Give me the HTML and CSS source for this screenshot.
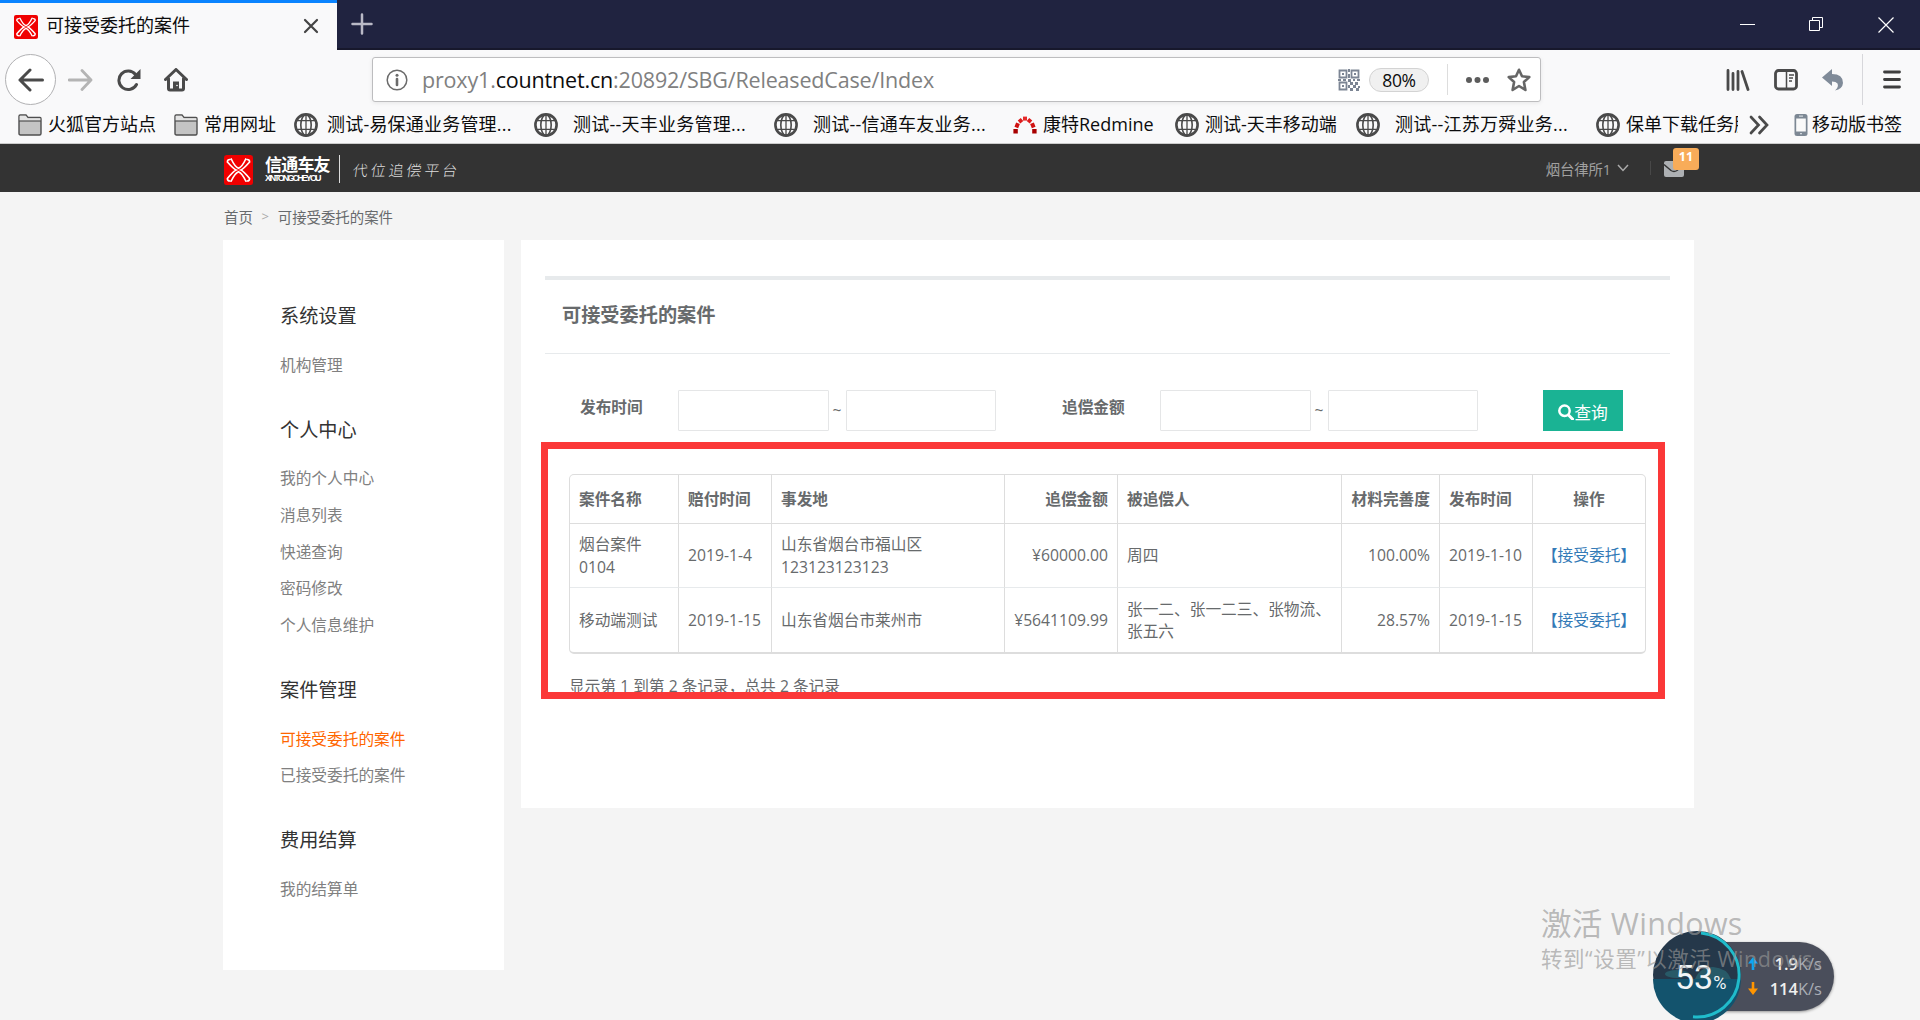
FILE: index.html
```html
<!DOCTYPE html>
<html lang="zh-CN">
<head>
<meta charset="utf-8">
<title>可接受委托的案件</title>
<link rel="stylesheet" href="styles.css">
</head>
<body>
<svg class="defs" width="0" height="0">
  <symbol id="globe" viewBox="0 0 24 24"><g fill="none" stroke="#4a4a4a"><circle cx="12" cy="12" r="10.6" stroke-width="2.6"/><ellipse cx="12" cy="12" rx="5.2" ry="10.4" stroke-width="1.6"/><path d="M12 1v22M3 7.6h18M3 16.4h18" stroke-width="1.3"/></g></symbol>
  <symbol id="folder" viewBox="0 0 24 24"><path d="M1 3.2Q1 2 2.200 2H8L10 4.500H22Q23 4.500 23 5.700V20.500Q23 22 21.500 22H2.500Q1 22 1 20.500Z" fill="#c4c4c4" stroke="#4f4f4f" stroke-width="1.400"/><path d="M1.700 7V3Q1.700 2.700 2.200 2.700H7.700L9.700 5.200H22.300V8H1.700Z" fill="#e4e4e4"/><path d="M1 8h22" stroke="#4f4f4f" stroke-width="1.200"/></symbol>
  <symbol id="brand" viewBox="0 0 30 30"><rect width="30" height="30" rx="2.500" fill="#f00000"/><path d="M7.500 4Q11 11.500 15 13.300Q19 11.500 22.500 4M7.500 26Q11 18.500 15 16.700Q19 18.500 22.500 26M3.500 7Q10 14 12.500 15Q10 16 3.500 23.500Q3.500 26 6 26M26.500 7Q20 14 17.500 15Q20 16 26.500 23.500Q26.500 26 24 26M3.500 7Q3.500 4.500 6 4.500M26.500 7Q26.500 4.500 24 4.500" fill="none" stroke="#fff" stroke-width="1.700" stroke-linecap="round"/></symbol>
</svg>

<div class="tabbar">
  <div class="tab">
    <svg class="tab-logo" width="24" height="24"><use href="#brand"/></svg>
    <span class="tab-title">可接受委托的案件</span>
    <svg width="16" height="16" viewBox="0 0 16 16"><path d="M2 2l12 12M14 2L2 14" stroke="#444" stroke-width="2.200" stroke-linecap="round"/></svg>
  </div>
  <svg class="plus" width="22" height="22" viewBox="0 0 22 22"><path d="M11 1.500v19M1.500 11h19" stroke="#b9b9c6" stroke-width="2.500" stroke-linecap="round"/></svg>
  <div class="winctl">
    <svg width="16" height="16"><path d="M0 7.500h15" stroke="#fff"/></svg>
    <svg width="16" height="16"><path d="M.5 3.500h10v10H.5zM3.500 3.500v-3h10v10h-3" fill="none" stroke="#fff"/></svg>
    <svg width="16" height="16"><path d="M.5 .5l15 15M15.500 .5l-15 15" stroke="#fff" stroke-width="1.200"/></svg>
  </div>
</div>

<div class="navbar">
  <div class="back"><svg width="26" height="24" viewBox="0 0 26 24"><path d="M24.500 12H2M12 2L2 12L12 22" fill="none" stroke="#4a4a4a" stroke-width="3" stroke-linecap="round" stroke-linejoin="round"/></svg></div>
  <svg class="fwd" width="25" height="24" viewBox="0 0 25 24"><path d="M1 12h22M14 2.500L23 12L14 21.500" fill="none" stroke="#b4b4b4" stroke-width="2.800" stroke-linecap="round" stroke-linejoin="round"/></svg>
  <svg class="reload" width="24" height="24" viewBox="0 0 24 24"><path d="M19.500 16.500A9.300 9.300 0 1 1 18.500 6.500" fill="none" stroke="#4a4a4a" stroke-width="3" stroke-linecap="round"/><path d="M23.500 1V11H13.500Z" fill="#4a4a4a"/></svg>
  <svg class="home" width="24" height="24" viewBox="0 0 24 24"><path d="M1.500 11.500L12 1.500L22.500 11.500M4.500 10.500V20.500Q4.500 22 6 22H18Q19.500 22 19.500 20.500V10.500" fill="none" stroke="#4a4a4a" stroke-width="3" stroke-linecap="round" stroke-linejoin="round"/><path d="M9 22V13.500H15V22Z" fill="#4a4a4a"/><circle cx="13" cy="17.500" r=".8" fill="#fff"/></svg>
  <div class="urlbar">
    <svg class="info" width="22" height="22" viewBox="0 0 22 22"><circle cx="11" cy="11" r="9.800" fill="none" stroke="#6b6b6b" stroke-width="1.500"/><path d="M11 10v6" stroke="#6b6b6b" stroke-width="2.600" stroke-linecap="round"/><circle cx="11" cy="6.300" r="1.500" fill="#6b6b6b"/></svg>
    <span class="url">proxy1.<b>countnet.cn</b>:20892/SBG/ReleasedCase/Index</span>
    <svg class="qr" width="22" height="22" viewBox="0 0 22 22"><g fill="none" stroke="#7c8594" stroke-width="1.800"><path d="M1.500 1.500h7v7h-7zM13.500 1.500h7v7h-7zM1.500 13.500h7v7h-7z"/></g><g fill="#7c8594"><path d="M4 4h2v2H4zM16 4h2v2h-2zM4 16h2v2H4zM10 0h2v3h-2zM10 5h2v4h-2zM0 10h3v2H0zM5 10h3v2H5zM10 10h3v3h-3zM15 10h2v2h-2zM19 10h3v2h-3zM12 13h3v3h-3zM17 13h3v3h-3zM10 16h2v3h-2zM15 16h3v3h-3zM20 17h2v2h-2zM12 19h3v3h-3zM18 19h3v3h-3z"/></g></svg>
    <span class="zoom">80%</span>
    <i class="sep"></i>
    <svg class="dots" width="24" height="8"><g fill="#5c5c5c"><circle cx="4" cy="4" r="3"/><circle cx="12.500" cy="4" r="3"/><circle cx="21" cy="4" r="3"/></g></svg>
    <svg class="star" width="24" height="24" viewBox="0 0 24 24"><path d="M12 1.800L15 8.300L22.300 9.100L16.900 14L18.400 22L12 18L5.600 22L7.100 14L1.700 9.100L9 8.300Z" fill="none" stroke="#666" stroke-width="2.600" stroke-linejoin="round"/></svg>
  </div>
  <div class="tools">
    <svg width="24" height="22" viewBox="0 0 24 22"><path d="M2 1.500v19M7 4.500v16M12 2.500v18M16 2.500l6 18" stroke="#4a4a4a" stroke-width="2.800" stroke-linecap="round"/></svg>
    <svg width="24" height="22" viewBox="0 0 24 22"><rect x="1.500" y="1.500" width="21" height="18.500" rx="3" fill="none" stroke="#4a4a4a" stroke-width="2.800"/><path d="M12.500 2v18M15 6h5M15 9h4M15 12h3" stroke="#4a4a4a" stroke-width="1.500"/></svg>
    <svg width="22" height="22" viewBox="0 0 22 22"><path d="M0 8.500L10 0V5Q21 5 21 14Q20.500 20 13 21.500Q17 18 15.500 14.500Q14 12.500 10 12.500V17Z" fill="#808b99"/></svg>
  </div>
  <svg class="burger" width="18" height="19" viewBox="0 0 18 19"><path d="M1.500 2h15M1.500 9.500h15M1.500 17h15" stroke="#3e3e3e" stroke-width="2.800" stroke-linecap="round"/></svg>
</div>

<div class="bookmarks">
  <div class="bm f"><svg><use href="#folder"/></svg><span>火狐官方站点</span></div>
  <div class="bm f"><svg><use href="#folder"/></svg><span>常用网址</span></div>
  <div class="bm g9"><svg><use href="#globe"/></svg><span>测试-易保通业务管理...</span></div>
  <div class="bm g15"><svg><use href="#globe"/></svg><span>测试--天丰业务管理...</span></div>
  <div class="bm g15"><svg><use href="#globe"/></svg><span>测试--信通车友业务...</span></div>
  <div class="bm f"><svg viewBox="0 0 24 24"><path d="M2.600 20.500V16" stroke="#a80000" stroke-width="4.400"/><path d="M21.400 20.500V16" stroke="#a80000" stroke-width="4.400"/><path d="M3.300 14.500L5 10.300M20.700 14.500L19 10.300" stroke="#d01212" stroke-width="4"/><path d="M6 9L9 6.500M18 9L15 6.500" stroke="#dd1c1c" stroke-width="4"/><path d="M10 5.600h4" stroke="#e52b2b" stroke-width="4"/></svg><span>康特Redmine</span></div>
  <div class="bm f"><svg><use href="#globe"/></svg><span>测试-天丰移动端</span></div>
  <div class="bm g15"><svg><use href="#globe"/></svg><span>测试--江苏万舜业务...</span></div>
  <div class="bm f last"><svg><use href="#globe"/></svg><span>保单下载任务服</span></div>
  <svg class="more" width="20" height="20" viewBox="0 0 20 20"><path d="M2 2l7.500 8L2 18M10.500 2L18 10l-7.500 8" fill="none" stroke="#4a4a4a" stroke-width="2.700" stroke-linecap="round"/></svg>
  <div class="bm phone"><svg viewBox="0 0 14 24"><rect x=".5" y="1" width="13" height="22" rx="2.500" fill="#7d8894"/><rect x="2.200" y="5.500" width="9.600" height="13" fill="#fafafa"/><path d="M5 3.200h4M6 20.700h2" stroke="#d0d6dc" stroke-width="1.300"/></svg><span>移动版书签</span></div>
</div>

<header class="site">
  <svg class="logo" width="29" height="30" viewBox="0 0 30 30" preserveAspectRatio="none"><use href="#brand"/></svg>
  <div class="brand"><span class="cn">信通车友</span><span class="en">XINTONGCHEYOU</span></div>
  <i class="bar"></i>
  <span class="slogan">代位追偿平台</span>
  <div class="user"><span>烟台律所1</span><svg width="12" height="8" viewBox="0 0 12 8"><path d="M1 1l5 5.500L11 1" fill="none" stroke="#aaa" stroke-width="1.500"/></svg></div>
  <i class="usep"></i>
  <div class="mail"><svg width="20" height="16" viewBox="0 0 20 16"><rect width="20" height="16" rx="2" fill="#adb0b3"/><path d="M0 3.500l7 6q3 2 6 0l7-6" fill="none" stroke="#333" stroke-width="1.400"/></svg><span class="badge">11</span></div>
</header>

<nav class="crumb"><span>首页</span><i>&gt;</i><span>可接受委托的案件</span></nav>

<div class="page">
  <aside>
    <section><h3>系统设置</h3><a>机构管理</a></section>
    <section><h3>个人中心</h3><a>我的个人中心</a><a>消息列表</a><a>快递查询</a><a>密码修改</a><a>个人信息维护</a></section>
    <section><h3>案件管理</h3><a class="on">可接受委托的案件</a><a>已接受委托的案件</a></section>
    <section><h3>费用结算</h3><a>我的结算单</a></section>
  </aside>
  <main>
    <h1>可接受委托的案件</h1>
    <form class="search">
      <label>发布时间</label><input type="text"><i>~</i><input type="text">
      <label class="second">追偿金额</label><input type="text"><i>~</i><input type="text">
      <button type="button"><svg width="16" height="16" viewBox="0 0 16 16"><circle cx="6.500" cy="6.800" r="5.200" fill="none" stroke="#fff" stroke-width="2.500"/><path d="M10.500 11l4 4" stroke="#fff" stroke-width="3" stroke-linecap="round"/></svg>查询</button>
    </form>
    <div class="result">
      <div class="tablebox">
      <table>
        <colgroup><col class="c1"><col class="c2"><col class="c3"><col class="c4"><col class="c5"><col class="c6"><col class="c7"><col class="c8"></colgroup>
        <thead><tr><th>案件名称</th><th>赔付时间</th><th>事发地</th><th class="r">追偿金额</th><th>被追偿人</th><th class="r">材料完善度</th><th>发布时间</th><th class="c">操作</th></tr></thead>
        <tbody>
          <tr><td>烟台案件<br>0104</td><td>2019-1-4</td><td>山东省烟台市福山区<br>123123123123</td><td class="r">¥60000.00</td><td>周四</td><td class="r">100.00%</td><td>2019-1-10</td><td class="c"><a>【接受委托】</a></td></tr>
          <tr><td>移动端测试</td><td>2019-1-15</td><td>山东省烟台市莱州市</td><td class="r">¥5641109.99</td><td>张一二、张一二三、张物流、<br>张五六</td><td class="r">28.57%</td><td>2019-1-15</td><td class="c"><a>【接受委托】</a></td></tr>
        </tbody>
      </table>
      </div>
      <p>显示第 1 到第 2 条记录，总共 2 条记录</p>
    </div>
  </main>
</div>

<div class="widget">
  <div class="pill">
    <div class="rate"><svg width="10" height="13" viewBox="0 0 10 13"><path d="M5 0l5 6.500H6.300V13H3.700V6.500H0z" fill="#10a5f5"/></svg><span><b>1.9</b>K/s</span></div>
    <div class="rate"><svg width="10" height="13" viewBox="0 0 10 13"><path d="M5 13l5-6.500H6.300V0H3.700v6.500H0z" fill="#ff9500"/></svg><span><b>114</b>K/s</span></div>
  </div>
  <svg class="ball" width="90" height="90" viewBox="0 0 90 90"><circle cx="45" cy="45" r="44" fill="#25384a"/><path d="M1 49H89A44 44 0 0 1 1 49Z" fill="#13536d"/><ellipse cx="25" cy="44" rx="12" ry="4" fill="#285a68"/><path d="M43 49Q48 37 61 37Q75 38 79 49Z" fill="#285a68"/><path d="M49 3A42 42 0 1 1 41 86.800" fill="none" stroke="#20bccb" stroke-width="3"/></svg>
  <div class="pct">53<small>%</small></div>
</div>
<div class="watermark"><div class="w1">激活 Windows</div><div class="w2">转到“设置”以激活 Windows。</div></div>
</body>
</html>
```
FILE: styles.css
```css
* { box-sizing: border-box; }
body { margin: 0; width: 1920px; height: 1020px; overflow: hidden; position: relative; background: #f4f4f4; font-family: "Open Sans", "Noto Sans CJK SC", sans-serif; color: #676a6c; }
i { font-style: normal; }
svg { display: block; flex: none; }
.defs { position: absolute; }

.tabbar { display: flex; align-items: center; height: 50px; background: #202340; border-bottom: 2px solid #17182c; }
.tab { display: flex; align-items: center; width: 337px; height: 50px; margin-bottom: -2px; padding: 0 18px 1px 14px; background: #f9f9fa; border-top: 3px solid #0a84ff; color: #0c0c0d; font-size: 18px; }
.tab-title { flex: 1; margin: -4px 0 0 8px; font-family: "Noto Sans CJK SC", sans-serif; }
.tab-logo { margin-top: 1px; }
.plus { margin-left: 14px; }
.winctl { display: flex; margin: 2px 26px 0 auto; gap: 53px; }

.navbar { display: flex; align-items: center; height: 58px; background: #f9f9fa; padding: 1px 0 0 5px; }
.back { display: flex; align-items: center; justify-content: center; width: 51px; height: 51px; border: 1px solid #b1b1b3; border-radius: 50%; background: #fff; }
.fwd { margin-left: 12px; }
.reload { margin-left: 24px; }
.home { margin-left: 23px; }
.urlbar { display: flex; align-items: center; width: 1169px; height: 45px; margin-left: 184px; padding-left: 13px; background: #fff; border: 1px solid #bdbdbf; border-radius: 3px; box-shadow: 0 1px 4px rgba(0,0,0,.08); }
.url { margin-left: 14px; width: 530px; font-size: 21.500px; color: #808080; white-space: nowrap; letter-spacing: -.17px; }
.url b { font-weight: 400; color: #0c0c0d; }
.qr { margin-left: auto; }
.zoom { width: 60px; height: 24px; margin-left: 9px; border: 1px solid #d3d3d3; border-radius: 12px; background: #f0f0f0; color: #0c0c0d; font-size: 17.500px; line-height: 22px; text-align: center; letter-spacing: -.4px; }
.sep { width: 1px; height: 31px; margin-left: 18px; background: #ddd; }
.dots { margin-left: 17px; }
.star { margin: 0 9px 0 18px; }
.tools { display: flex; align-items: center; gap: 24px; height: 51px; margin-left: 185px; padding-right: 18px; border-right: 1px solid #d7d7db; }
.burger { margin-left: 20px; }

.bookmarks { display: grid; grid-template-columns: 156px 120px 240px 240px 239px 162px 181px 240px 142px 56px 1fr; align-items: center; height: 36px; padding: 0 0 2px 18px; background: #f9f9fa; border-bottom: 1px solid #ccc; font-size: 18px; color: #0c0c0d; white-space: nowrap; }
.bm { display: flex; align-items: center; height: 30px; line-height: 26px; }
.bm svg { width: 24px; height: 24px; }
.bm span { margin: -1px 0 0 6px; }
.bm.g9 span { margin-left: 9px; letter-spacing: .2px; }
.bm.g15 span { margin-left: 15px; letter-spacing: .25px; }
.bm.last { overflow: hidden; }
.more { margin-left: 11px; }
.bm.phone svg { width: 14px; }
.bm.phone span { margin-left: 4px; }

.site { display: flex; align-items: center; height: 48px; padding-left: 224px; background: #333; }
.logo { margin-top: 4px; }
.brand { display: flex; flex-direction: column; width: 66px; height: 28px; margin: 2px 0 0 12px; color: #fff; white-space: nowrap; }
.cn { font-weight: 700; font-size: 17px; line-height: 19px; letter-spacing: -.8px; }
.en { font: bold 9px/9px "Liberation Sans", sans-serif; letter-spacing: -1.900px; }
.bar { width: 1px; height: 28px; margin: 2px 0 0 8px; background: #ddd; }
.slogan { width: 110px; margin: 2px 0 0 13px; font-size: 15px; letter-spacing: 2.900px; color: #ddd; font-weight: 300; transform: skewX(-8deg); white-space: nowrap; }
.user { display: flex; align-items: center; gap: 6px; margin: -1px 0 0 auto; color: #a0a0a0; font-size: 14.400px; letter-spacing: -.1px; white-space: nowrap; }
.user span { margin-top: 2px; }
.usep { width: 1px; height: 14px; margin-left: 21px; background: #484848; }
.mail { position: relative; margin: 0 236px 0 13px; }
.badge { position: absolute; left: 9px; top: -12px; width: 26px; height: 22px; border-radius: 3px; background: #f8ac59; color: #fff; font-size: 12.500px; font-weight: 700; line-height: 18px; text-align: center; }
.mail svg { margin-top: 1px; }

.crumb { display: flex; align-items: center; height: 48px; padding: 0 0 0 224px; font-size: 14.400px; }
.crumb i { width: 25px; text-align: center; color: #aaa; font-size: 13px; }
.page { display: flex; align-items: flex-start; gap: 17px; padding-left: 223px; }
aside { width: 281px; height: 730px; padding: 62px 0 0 57px; background: #fff; }
aside section { display: flow-root; margin-bottom: 32.400px; }
aside h3 { margin: 0 0 16.600px; font-size: 19.200px; line-height: 28px; font-weight: 400; color: #333; }
aside a { display: block; height: 36.700px; line-height: 36.700px; font-size: 15.700px; color: #808080; }
aside .on { color: #ff6600; }
main { width: 1173px; height: 568px; padding: 36px 24px 0; background: #fff; }
h1 { margin: 0; height: 78px; padding-left: 17px; border-top: 4px solid #e7eaec; border-bottom: 1px solid #e7eaec; font-size: 19.200px; line-height: 69px; font-weight: 700; }
.search { display: flex; height: 88px; padding: 36px 0 0 35px; font-size: 15.700px; }
.search label { width: 98px; line-height: 35px; font-weight: 600; }
.search .second { margin-left: 66px; width: 98px; }
.search input { width: 150.500px; height: 41px; border: 1px solid #e5e6e7; border-radius: 1px; background: #fff; }
.search i { width: 17px; text-align: center; line-height: 41px; font-size: 15.600px; }
.search button { display: flex; align-items: center; justify-content: center; width: 80px; height: 41px; margin-left: 65px; padding: 3px 0 0; border: 0; background: #1ab394; color: #fff; font: 16.800px "Open Sans", "Noto Sans CJK SC", sans-serif; }
.result { position: relative; width: 1124px; height: 257px; margin-left: -4px; padding: 25px 12px 0 21px; border: 7px solid #fb3838; overflow: hidden; font-size: 15.700px; }
.tablebox { width: 1077px; height: 180px; border: 1px solid #ddd; border-bottom-width: 2px; border-radius: 5px; overflow: hidden; }
table { width: 1075px; border-collapse: separate; border-spacing: 0; table-layout: fixed; line-height: 22.300px; }
th, td { padding: 0 9px; border-right: 1px solid #ddd; text-align: left; white-space: nowrap; }
th:last-child, td:last-child { border-right: 0; padding: 0; }
th { height: 49px; font-weight: 600; border-bottom: 1px solid #ddd; }
td { height: 64px; border-bottom: 1px solid #e7eaec; }
tr:last-child td { height: 65px; }
th.r, td.r { text-align: right; }
th.c, td.c { text-align: center; }
.c1 { width: 109px; } .c2 { width: 93px; } .c3 { width: 233px; } .c4 { width: 113px; } .c5 { width: 224px; } .c6 { width: 98px; } .c7 { width: 93px; } .c8 { width: 112px; }
td a { color: #337ab7; }
.result p { margin: 21px 0 0; line-height: 22px; white-space: nowrap; }

.watermark { position: absolute; left: 1541px; top: 900px; color: rgba(150,150,150,.65); white-space: nowrap; }
.w1 { font-size: 30.500px; line-height: 46px; letter-spacing: .3px; }
.w2 { font-size: 21.500px; line-height: 26px; letter-spacing: .55px; }
.widget { position: absolute; left: 1652px; top: 930px; width: 184px; height: 90px; }
.ball { position: absolute; left: 0; top: 0; }
.pill { position: absolute; left: 50px; top: 12px; width: 132px; height: 69px; padding: 9px 12px 0 46px; border-radius: 0 35px 35px 0; background: #4a4e5b; box-shadow: 0 1px 3px rgba(0,0,0,.4); }
.rate { display: flex; align-items: center; justify-content: space-between; height: 25px; color: #a9adb5; font-size: 16.500px; }
.rate b { color: #f0f0f0; font-weight: 600; }
.pct { position: absolute; left: 23px; top: 27px; color: #f2f5f7; font: 34px/40px "Roboto", sans-serif; white-space: nowrap; }
.pct small { font-size: 18px; }
```
